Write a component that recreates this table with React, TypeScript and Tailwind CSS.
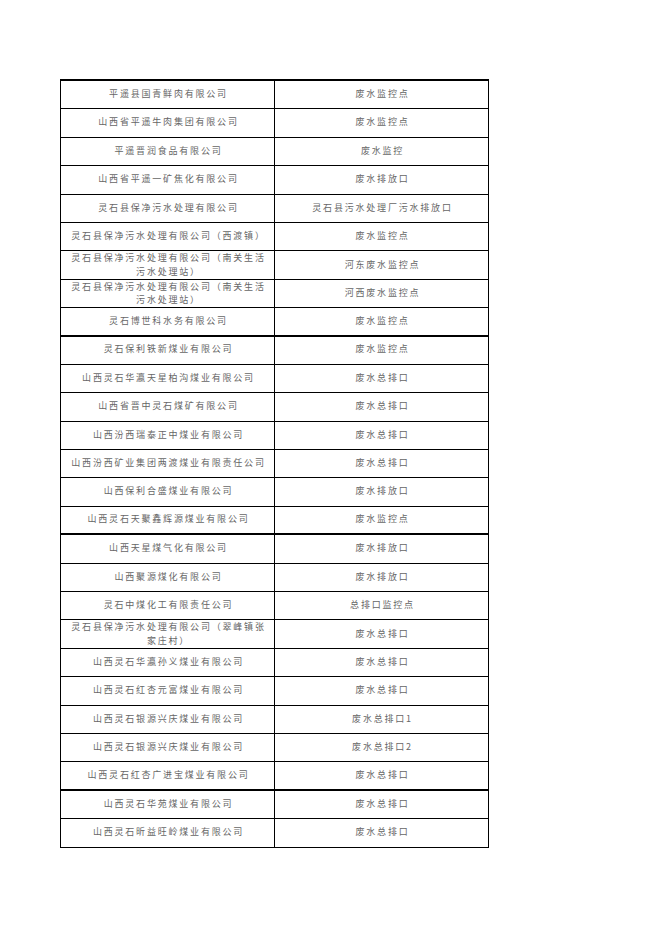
type Row = { name: string[]; point: string; thick?: boolean }

const rows: Row[] = [
  { name: ["平遥县国青鲜肉有限公司"], point: "废水监控点" },
  { name: ["山西省平遥牛肉集团有限公司"], point: "废水监控点" },
  { name: ["平遥晋润食品有限公司"], point: "废水监控" },
  { name: ["山西省平遥一矿焦化有限公司"], point: "废水排放口" },
  { name: ["灵石县保净污水处理有限公司"], point: "灵石县污水处理厂污水排放口" },
  { name: ["灵石县保净污水处理有限公司（西渡镇）"], point: "废水监控点" },
  { name: ["灵石县保净污水处理有限公司（南关生活", "污水处理站）"], point: "河东废水监控点" },
  { name: ["灵石县保净污水处理有限公司（南关生活", "污水处理站）"], point: "河西废水监控点" },
  { name: ["灵石博世科水务有限公司"], point: "废水监控点", thick: true },
  { name: ["灵石保利铁新煤业有限公司"], point: "废水监控点" },
  { name: ["山西灵石华瀛天星柏沟煤业有限公司"], point: "废水总排口" },
  { name: ["山西省晋中灵石煤矿有限公司"], point: "废水总排口" },
  { name: ["山西汾西瑞泰正中煤业有限公司"], point: "废水总排口" },
  { name: ["山西汾西矿业集团两渡煤业有限责任公司"], point: "废水总排口" },
  { name: ["山西保利合盛煤业有限公司"], point: "废水排放口" },
  { name: ["山西灵石天聚鑫辉源煤业有限公司"], point: "废水监控点", thick: true },
  { name: ["山西天星煤气化有限公司"], point: "废水排放口" },
  { name: ["山西聚源煤化有限公司"], point: "废水排放口" },
  { name: ["灵石中煤化工有限责任公司"], point: "总排口监控点" },
  { name: ["灵石县保净污水处理有限公司（翠峰镇张", "家庄村）"], point: "废水总排口" },
  { name: ["山西灵石华瀛孙义煤业有限公司"], point: "废水总排口" },
  { name: ["山西灵石红杏元富煤业有限公司"], point: "废水总排口" },
  { name: ["山西灵石银源兴庆煤业有限公司"], point: "废水总排口1" },
  { name: ["山西灵石银源兴庆煤业有限公司"], point: "废水总排口2" },
  { name: ["山西灵石红杏广进宝煤业有限公司"], point: "废水总排口", thick: true },
  { name: ["山西灵石华苑煤业有限公司"], point: "废水总排口" },
  { name: ["山西灵石昕益旺岭煤业有限公司"], point: "废水总排口" },
]

export default function App() {
  return (
    <div className="min-h-[936px] w-[662px] bg-white pt-[79px] pl-[60px] font-['Noto_Sans_CJK_SC',sans-serif] text-[9px] tracking-[1.8px] text-[#666]">
      <div className="w-[429px] border-x border-t-2 border-black">
        {rows.map((r, i) => (
          <div
            key={i}
            className={`grid h-[28.4px] grid-cols-[214px_213px] border-black ${r.thick ? "border-b-2" : "border-b"}`}
          >
            <div className="flex flex-col items-center justify-center border-r border-black pb-[2px] pl-[2px] text-center leading-[13.5px]">
              {r.name.map((line, j) => (
                <span key={j}>{line}</span>
              ))}
            </div>
            <div className="flex items-center justify-center pb-[2px] pl-[2px]">{r.point}</div>
          </div>
        ))}
      </div>
    </div>
  )
}
